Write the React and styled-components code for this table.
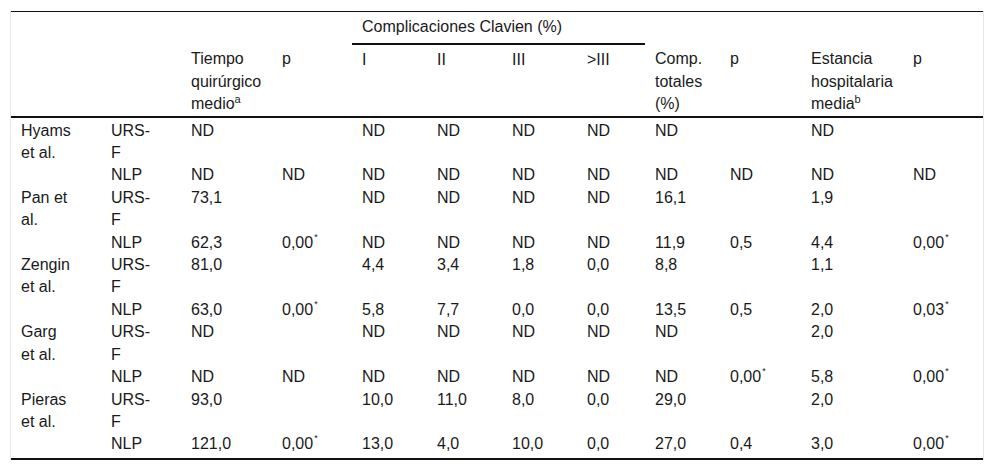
import React from "react";
import styled, { createGlobalStyle } from "styled-components";

const GlobalStyle = createGlobalStyle`
  html, body {
    margin: 0;
    padding: 0;
    background: #fff;
  }
  body {
    font-family: "Liberation Sans", Arial, sans-serif;
    color: #1a1a1a;
  }
`;

const Frame = styled.div`
  margin: 11px 0 0 10px;
  width: 972px;
  border-left: 1px solid #e6e6e6;
  border-right: 1px solid #e6e6e6;
`;

const Table = styled.table`
  width: 972px;
  table-layout: fixed;
  border-collapse: collapse;
  border-top: 1px solid #111;
  border-bottom: 2px solid #111;
  font-size: 16px;
  line-height: 22.4px;

  thead {
    border-bottom: 2px solid #111;
  }
`;

const Head = styled.th`
  text-align: left;
  vertical-align: top;
  font-weight: normal;
  padding: ${(p) => (p.$top ? "4px 28px 5px 10px" : "4px 28px 0 10px")};
  border-bottom: ${(p) => (p.$rule ? "2px solid #111" : "none")};
`;

const Row = styled.tr`
  &:first-child td {
    padding-top: 2px;
  }
  &:last-child td {
    padding-bottom: 2px;
  }
`;

const Cell = styled.td`
  text-align: left;
  vertical-align: top;
  padding: 0 28px 0 10px;
`;

const Sup = styled.sup`
  font-size: 11px;
  line-height: 1;
  vertical-align: 6px;
`;

const Star = styled.sup`
  font-size: 9px;
  line-height: 1;
  vertical-align: 8px;
  margin-left: 1px;
`;

const widths = [90, 80, 91, 80, 75, 75, 75, 68, 75, 81, 102, 80];

const studies = [
  {
    name: "Hyams et al.",
    urs: ["ND", "", "ND", "ND", "ND", "ND", "ND", "", "ND", ""],
    nlp: ["ND", "ND", "ND", "ND", "ND", "ND", "ND", "ND", "ND", "ND"],
  },
  {
    name: "Pan et al.",
    urs: ["73,1", "", "ND", "ND", "ND", "ND", "16,1", "", "1,9", ""],
    nlp: ["62,3", "0,00*", "ND", "ND", "ND", "ND", "11,9", "0,5", "4,4", "0,00*"],
  },
  {
    name: "Zengin et al.",
    urs: ["81,0", "", "4,4", "3,4", "1,8", "0,0", "8,8", "", "1,1", ""],
    nlp: ["63,0", "0,00*", "5,8", "7,7", "0,0", "0,0", "13,5", "0,5", "2,0", "0,03*"],
  },
  {
    name: "Garg et al.",
    urs: ["ND", "", "ND", "ND", "ND", "ND", "ND", "", "2,0", ""],
    nlp: ["ND", "ND", "ND", "ND", "ND", "ND", "ND", "0,00*", "5,8", "0,00*"],
  },
  {
    name: "Pieras et al.",
    urs: ["93,0", "", "10,0", "11,0", "8,0", "0,0", "29,0", "", "2,0", ""],
    nlp: ["121,0", "0,00*", "13,0", "4,0", "10,0", "0,0", "27,0", "0,4", "3,0", "0,00*"],
  },
];

const Value = ({ text }) =>
  text.endsWith("*") ? (
    <>
      {text.slice(0, -1)}
      <Star>*</Star>
    </>
  ) : (
    text
  );

export default function App() {
  const rows = [];
  studies.forEach((s) => {
    rows.push({ key: s.name + "u", name: s.name, group: "URS-F", vals: s.urs });
    rows.push({ key: s.name + "n", name: "", group: "NLP", vals: s.nlp });
  });

  return (
    <>
      <GlobalStyle />
      <Frame>
        <Table>
          <colgroup>
            {widths.map((w, i) => (
              <col key={i} style={{ width: w }} />
            ))}
          </colgroup>
          <thead>
            <tr>
              <Head $top />
              <Head $top />
              <Head $top />
              <Head $top />
              <Head $top $rule colSpan={4}>
                Complicaciones Clavien (%)
              </Head>
              <Head $top />
              <Head $top />
              <Head $top />
              <Head $top />
            </tr>
            <tr>
              <Head />
              <Head />
              <Head>
                Tiempo quirúrgico medio<Sup>a</Sup>
              </Head>
              <Head>p</Head>
              <Head>I</Head>
              <Head>II</Head>
              <Head>III</Head>
              <Head>&gt;III</Head>
              <Head>Comp. totales (%)</Head>
              <Head>p</Head>
              <Head>
                Estancia hospitalaria media<Sup>b</Sup>
              </Head>
              <Head>p</Head>
            </tr>
          </thead>
          <tbody>
            {rows.map((r) => (
              <Row key={r.key}>
                <Cell>{r.name}</Cell>
                <Cell>{r.group}</Cell>
                {r.vals.map((v, i) => (
                  <Cell key={i}>
                    <Value text={v} />
                  </Cell>
                ))}
              </Row>
            ))}
          </tbody>
        </Table>
      </Frame>
    </>
  );
}
